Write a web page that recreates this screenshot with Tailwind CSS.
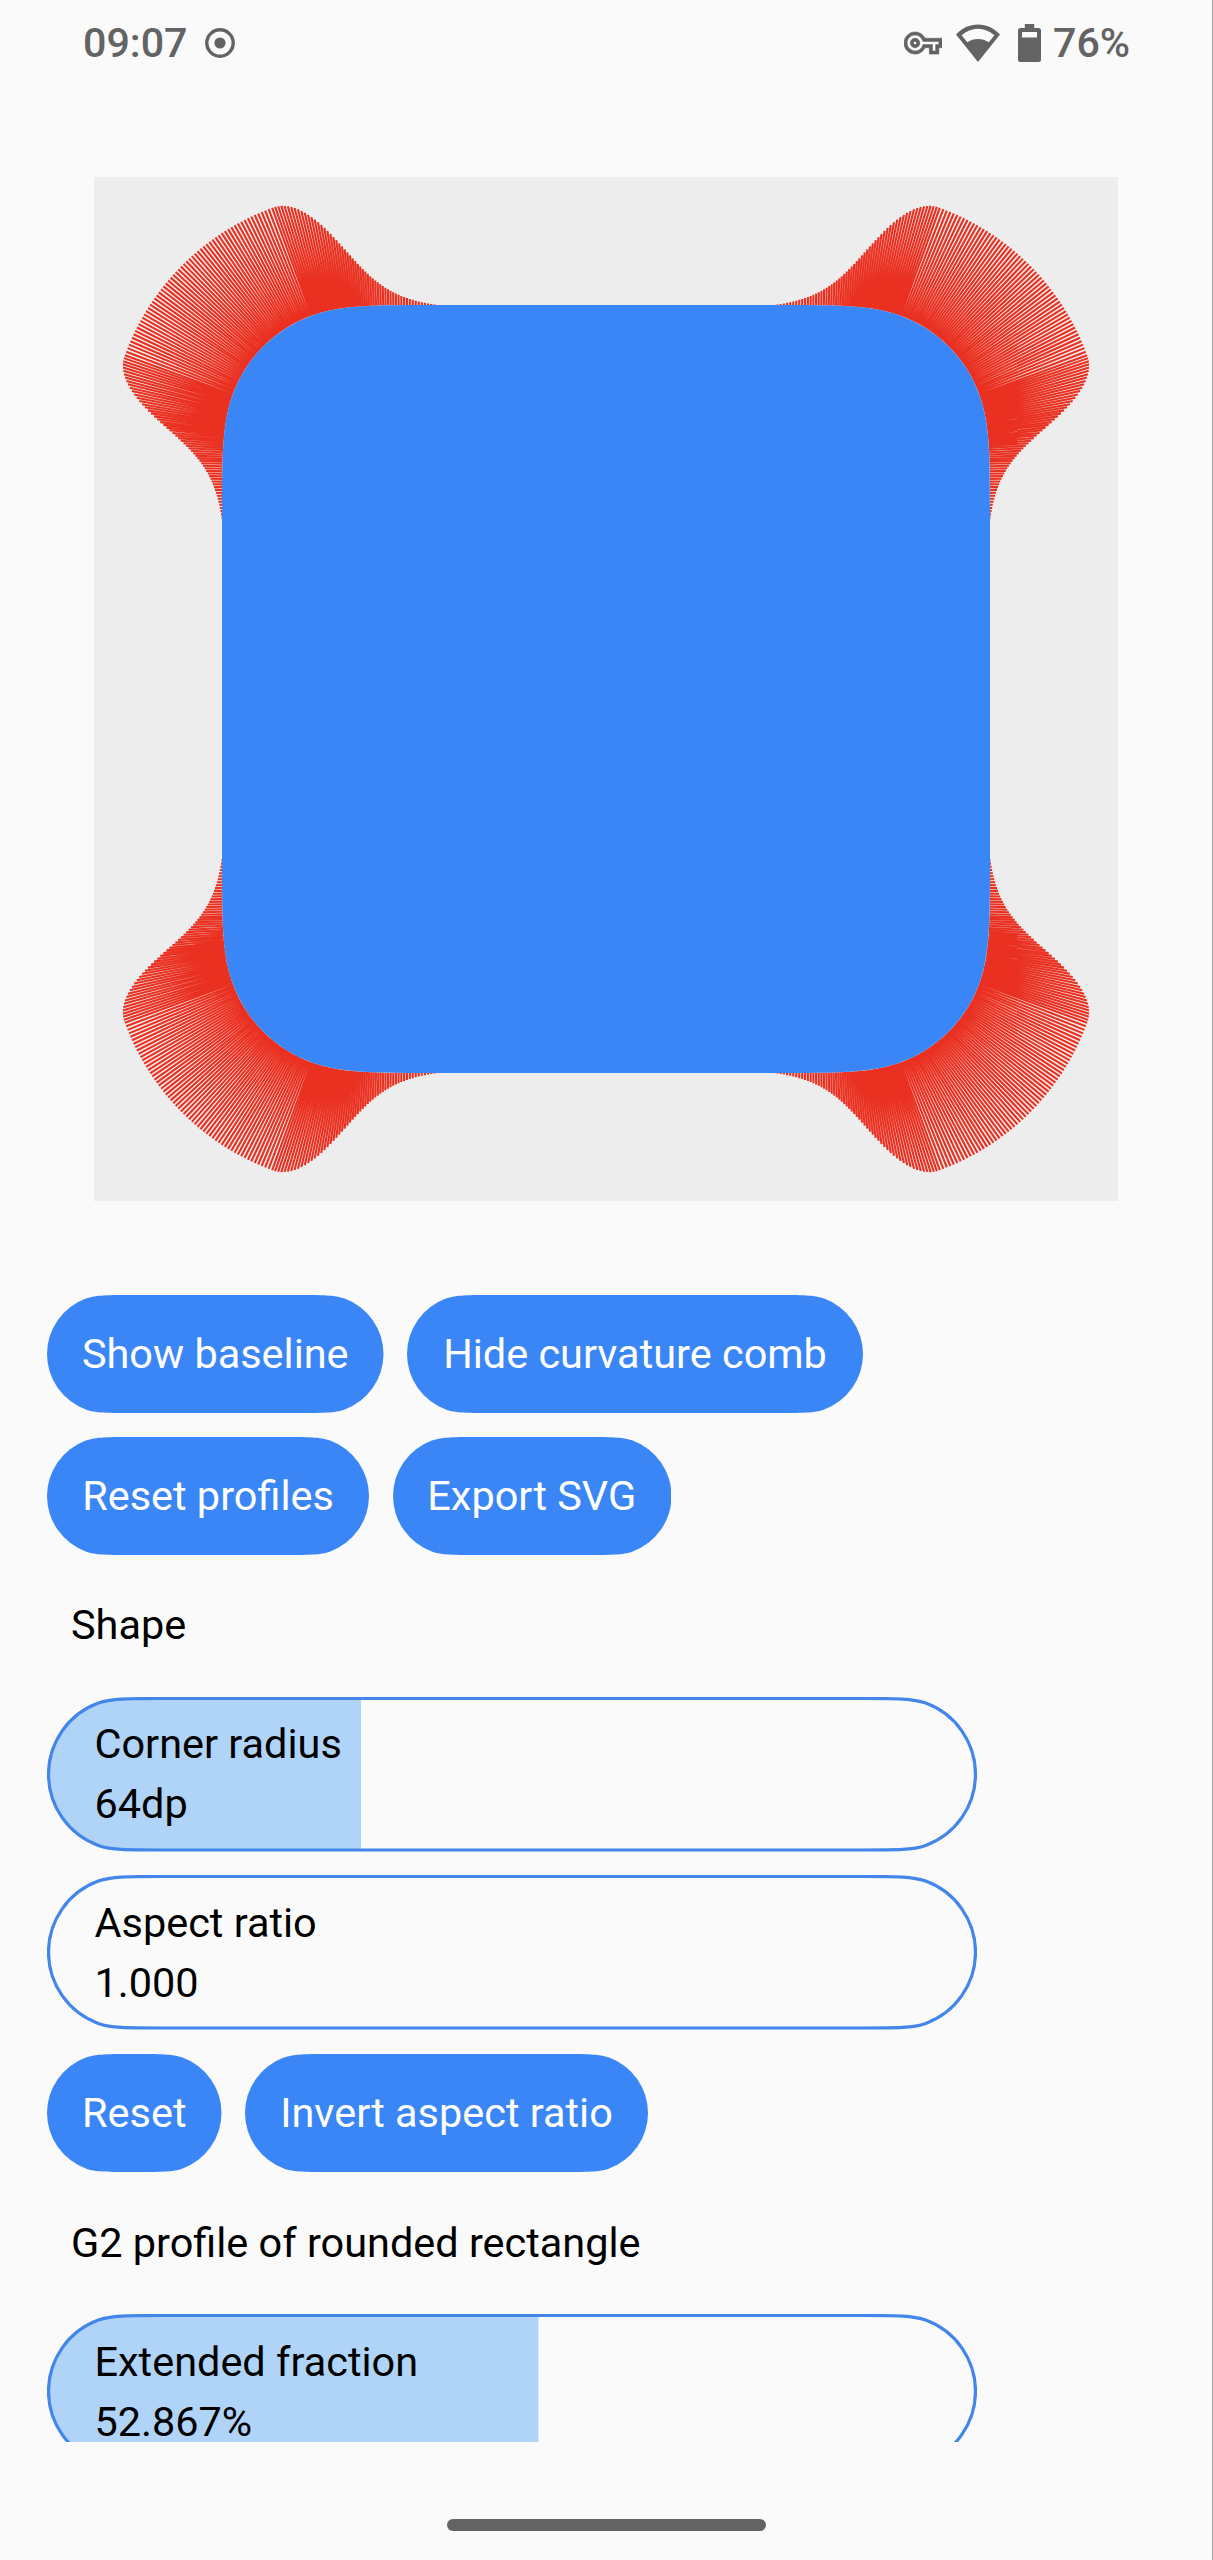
<!DOCTYPE html>
<html lang="en">
<head>
<meta charset="utf-8">
<meta name="viewport" content="width=device-width, initial-scale=1">
<title>Capsule playground</title>
<script src="https://cdn.jsdelivr.net/npm/@tailwindcss/browser@4"></script>
</head>
<body class="bg-[#fafafa]">
<div class="flex h-[2560px] w-[1213px] flex-col overflow-hidden border-r border-[#a3a3a3] bg-[#fafafa] font-['Roboto',sans-serif] text-[41.45px] leading-[60px] text-black">

  <!-- Status bar -->
  <header class="flex h-[86px] shrink-0 items-center justify-between pl-[83px] pr-[82px] text-[41.2px] font-medium text-[#636363]">
    <div class="flex items-center">
      <span class="w-[122px] whitespace-nowrap">09:07</span>
      <svg class="size-[30px]" viewBox="0 0 30 30" fill="none"><circle cx="15" cy="15" r="13.2" stroke="#636363" stroke-width="3.4"/><circle cx="15" cy="15" r="5.6" fill="#636363"/></svg>
    </div>
    <div class="flex items-center">
      <svg class="mr-[14px] size-[38px]" viewBox="0 0 24 24" fill="#636363" stroke="#636363" stroke-width=".35"><path d="M22 19h-6v-4h-2.68c-1.14 2.42-3.6 4-6.32 4-3.86 0-7-3.14-7-7s3.14-7 7-7c2.72 0 5.17 1.58 6.32 4H24v6h-2v4zm-4-2h2v-4h2v-2H11.94l-.23-.67C11.01 8.34 9.11 7 7 7c-2.76 0-5 2.24-5 5s2.24 5 5 5c2.11 0 4.01-1.34 4.71-3.33l.23-.67H18v4zM7 15c-1.65 0-3-1.35-3-3s1.35-3 3-3 3 1.35 3 3-1.35 3-3 3zm0-4c-.55 0-1 .45-1 1s.45 1 1 1 1-.45 1-1-.45-1-1-1z"/></svg>
      <svg class="mr-[18px] h-[38px] w-[44px]" viewBox="0 0 44 38" fill="#636363"><path fill-rule="evenodd" d="M22 38 0 10.6C6 4 13.5.6 22 .6S38 4 44 10.6ZM5.6 11.3 11.2 18.3C14.3 16.2 18 15 22 15s7.700 1.200 10.800 3.300L38.400 11.300C33.600 7 28 4.800 22 4.800S10.400 7 5.600 11.300Z"/></svg>
      <svg class="mr-[12.500px] h-[38px] w-[23px]" viewBox="0 0 23 38" fill="#636363"><path fill-rule="evenodd" d="M6.800 0h9.400v4h4.300a2.500 2.500 0 0 1 2.500 2.500v29a2.500 2.500 0 0 1-2.500 2.500h-18A2.500 2.500 0 0 1 0 35.500v-29A2.500 2.500 0 0 1 2.500 4h4.300ZM4 8v5.500h15V8Z"/></svg>
      <span class="w-[77px] whitespace-nowrap">76%</span>
    </div>
  </header>

  <main class="flex h-[2356px] shrink-0 flex-col overflow-hidden">
    <!-- Shape preview with curvature comb -->
    <svg class="ml-[94px] mt-[91px] size-[1024px] shrink-0 bg-[#ededed]" viewBox="0 0 1024 1024">
      <path id="comb" fill="none" stroke="#ea3020" stroke-width="2.1"/>
      <path id="shape" fill="#3b86f7"/>
    </svg>

    <section class="ml-[47px] mt-[94px] flex shrink-0 flex-col items-start text-white">
      <div class="flex gap-[23.500px]">
        <button data-capsule="fill" class="relative flex h-[118px] w-[336.500px] items-center justify-center whitespace-nowrap"><span class="relative">Show baseline</span></button>
        <button data-capsule="fill" class="relative flex h-[118px] w-[456px] items-center justify-center whitespace-nowrap"><span class="relative">Hide curvature comb</span></button>
      </div>
      <div class="mt-[23.500px] flex gap-[23.500px]">
        <button data-capsule="fill" class="relative flex h-[118px] w-[322px] items-center justify-center whitespace-nowrap"><span class="relative">Reset profiles</span></button>
        <button data-capsule="fill" class="relative flex h-[118px] w-[278.500px] items-center justify-center whitespace-nowrap"><span class="relative">Export SVG</span></button>
      </div>
    </section>

    <h2 class="ml-[71px] mt-[40.500px] h-[102px] shrink-0">Shape</h2>

    <section class="ml-[47px] flex shrink-0 flex-col items-start">
      <div data-capsule="slider" data-value="314" class="relative h-[154.500px] w-[930px] shrink-0 pl-[47.500px] pt-[17px]">
        <p class="relative">Corner radius</p>
        <p class="relative">64dp</p>
      </div>
      <div data-capsule="slider" data-value="0" class="relative mt-[23.500px] h-[154.500px] w-[930px] shrink-0 pl-[47.500px] pt-[18px]">
        <p class="relative">Aspect ratio</p>
        <p class="relative">1.000</p>
      </div>
      <div class="mt-[24px] flex gap-[23.500px] text-white">
        <button data-capsule="fill" class="relative flex h-[118px] w-[174.500px] items-center justify-center whitespace-nowrap"><span class="relative">Reset</span></button>
        <button data-capsule="fill" class="relative flex h-[118px] w-[403px] items-center justify-center whitespace-nowrap"><span class="relative">Invert aspect ratio</span></button>
      </div>
    </section>

    <h2 class="ml-[71px] mt-[41px] h-[101.500px] shrink-0">G2 profile of rounded rectangle</h2>

    <div data-capsule="slider" data-value="491.500" class="relative ml-[47px] h-[154.500px] w-[930px] shrink-0 pl-[47.500px] pt-[17.500px]">
      <p class="relative">Extended fraction</p>
      <p class="relative">52.867%</p>
    </div>
  </main>

  <footer class="flex grow items-start justify-center pt-[76.500px]">
    <div class="h-3 w-[319px] rounded-full bg-[#636363]"></div>
  </footer>
</div>

<script>
// Smooth capsule outline: circular ends eased into the straight edges
function capsule(w, h, i) {
  const r = h / 2 - i, x0 = i, x1 = w - i, y0 = i, y1 = h - i;
  const L = k => x0 + k * r, R = k => x1 - k * r, T = k => y0 + k * r, B = k => y1 - k * r;
  return `M${L(1.5)} ${y0}H${R(1.5)}C${R(1.03)} ${y0} ${R(.824)} ${y0} ${R(.658)} ${T(.0603)}` +
    `A${r} ${r} 0 0 1 ${R(.658)} ${B(.0603)}C${R(.824)} ${y1} ${R(1.03)} ${y1} ${R(1.5)} ${y1}` +
    `H${L(1.5)}C${L(1.03)} ${y1} ${L(.824)} ${y1} ${L(.658)} ${B(.0603)}` +
    `A${r} ${r} 0 0 1 ${L(.658)} ${T(.0603)}C${L(.824)} ${y0} ${L(1.03)} ${y0} ${L(1.5)} ${y0}Z`;
}
let ids = 0;
function drawCapsule(el) {
  const { width: w, height: h } = el.getBoundingClientRect(), id = 'clip' + ids++;
  let body;
  if (el.dataset.capsule === 'fill') {
    body = `<path d="${capsule(w, h, 0)}" fill="#3b86f7"/>`;
  } else {
    const d = capsule(w, h, 1.5);
    body = `<clipPath id="${id}"><path d="${d}"/></clipPath>` +
      `<rect width="${el.dataset.value}" height="${h}" fill="#b0d3f8" clip-path="url(#${id})"/>` +
      `<path d="${d}" fill="none" stroke="#4286ea" stroke-width="3.2"/>`;
  }
  el.querySelector(':scope > svg')?.remove();
  el.insertAdjacentHTML('afterbegin', `<svg class="absolute inset-0 size-full" viewBox="0 0 ${w} ${h}">${body}</svg>`);
}
const watcher = new ResizeObserver(list => list.forEach(e => drawCapsule(e.target)));
document.querySelectorAll('[data-capsule]').forEach(el => watcher.observe(el));

// Rounded rectangle with curvature-continuous corners
const O = 128, S = 768, RAD = 131.7, C = 134.5, A = 20 * Math.PI / 180, TOOTH = 114.8;
const ex = C - RAD * Math.sin(A), ey = C - RAD * Math.cos(A);
const x2 = ex + ey / Math.tan(A), hand = Math.hypot(x2 - ex, ey);
const x1 = x2 + 1.5 * hand * hand / RAD / Math.sin(A);
const P = [[216, 0], [x1, 0], [x2, 0], [ex, ey]];
const K = TOOTH * RAD, N = 57;
const map = [(x, y) => [O + x, O + y], (x, y) => [O + S - y, O + x], (x, y) => [O + S - x, O + S - y], (x, y) => [O + y, O + S - x]];
let outline = '';
map.forEach((m, i) => {
  const p = (x, y) => m(x, y).join(' ');
  outline += `${i ? 'L' : 'M'}${p(0, 216)}C${p(0, x1)} ${p(0, x2)} ${p(ey, ex)}A${RAD} ${RAD} 0 0 1 ${p(ex, ey)}C${p(x2, 0)} ${p(x1, 0)} ${p(216, 0)}`;
});
document.getElementById('shape').setAttribute('d', outline + 'Z');

const teeth = [];
for (let i = 0; i <= N; i++) {
  const t = i / N, u = 1 - t;
  const q = k => u * u * u * P[0][k] + 3 * u * u * t * P[1][k] + 3 * u * t * t * P[2][k] + t * t * t * P[3][k];
  const d = k => 3 * (u * u * (P[1][k] - P[0][k]) + 2 * u * t * (P[2][k] - P[1][k]) + t * t * (P[3][k] - P[2][k]));
  const e = k => 6 * (u * (P[2][k] - 2 * P[1][k] + P[0][k]) + t * (P[3][k] - 2 * P[2][k] + P[1][k]));
  const dx = d(0), dy = d(1), l = Math.hypot(dx, dy);
  const len = K * Math.abs(dx * e(1) - dy * e(0)) / (l * l * l);
  const x = q(0), y = q(1), tx = x - dy / l * len, ty = y + dx / l * len;
  teeth.push([x, y, tx, ty], [y, x, ty, tx]);
}
for (let i = 1; i < N; i++) {
  const a = A + (Math.PI / 2 - 2 * A) * i / N, s = Math.sin(a), c = Math.cos(a);
  teeth.push([C - RAD * s, C - RAD * c, C - (RAD + TOOTH) * s, C - (RAD + TOOTH) * c]);
}
document.getElementById('comb').setAttribute('d', map.map(m => teeth.map(([a, b, c, d]) => `M${m(a, b).join(' ')}L${m(c, d).join(' ')}`).join('')).join(''));
</script>
</body>
</html>
